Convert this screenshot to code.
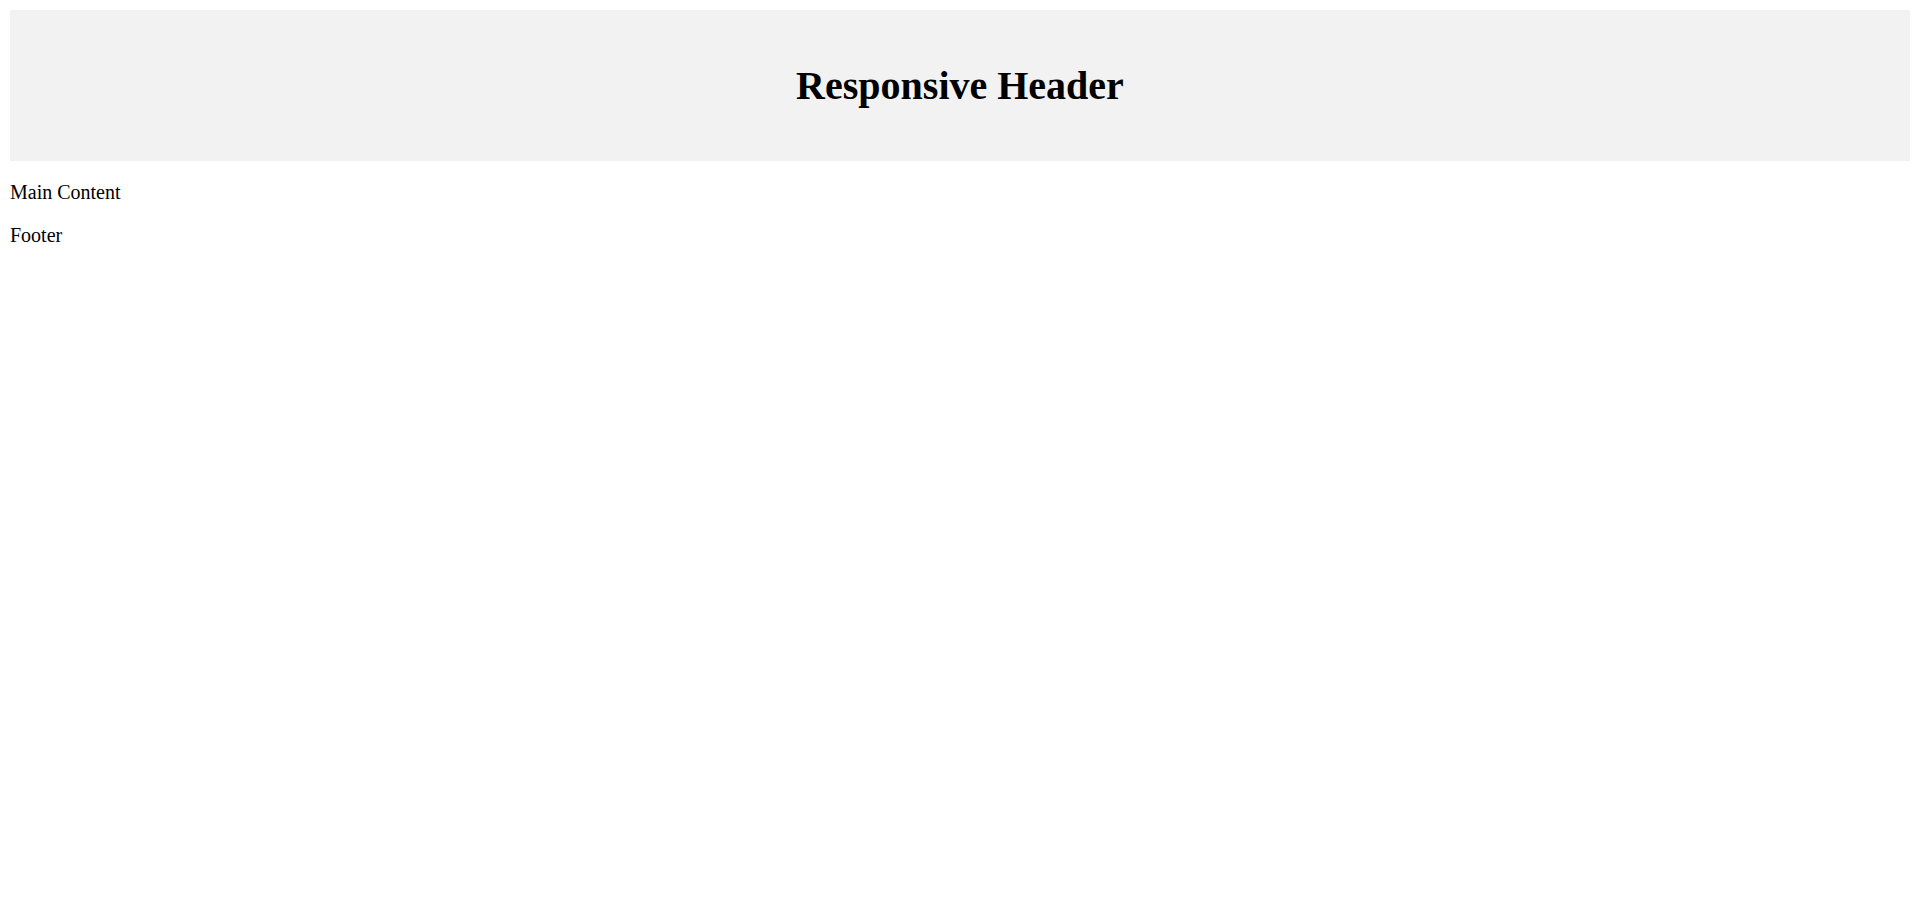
export default function App() {
  return (
    <div className="m-[10px] font-['Liberation_Serif',serif] text-black">
      <header className="bg-[#f2f2f2] px-[25px] py-[25px] text-center">
        <h1 className="my-[27px] text-[40px] font-bold leading-[47px]">Responsive Header</h1>
      </header>
      <main>
        <p className="my-[20px] text-[20px] leading-[23px]">Main Content</p>
      </main>
      <footer>
        <p className="my-[20px] text-[20px] leading-[23px]">Footer</p>
      </footer>
    </div>
  )
}
